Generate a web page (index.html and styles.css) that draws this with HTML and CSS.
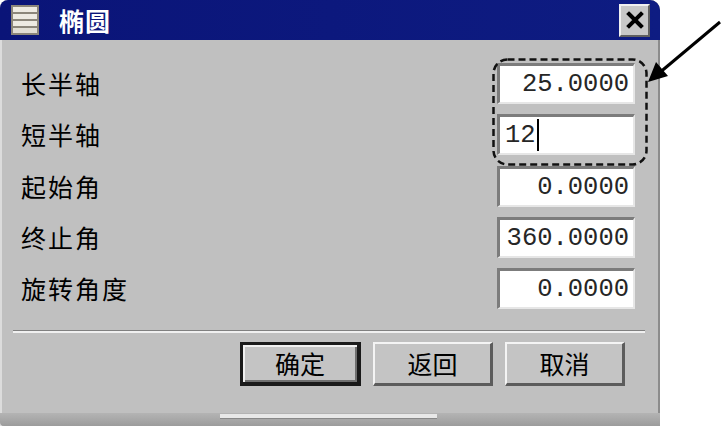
FILE: index.html
```html
<!DOCTYPE html>
<html lang="zh-CN">
<head>
    <meta charset="UTF-8">
    <title>椭圆</title>
    <link rel="stylesheet" href="styles.css">
</head>
<body>

    <div class="dialog">
        <div class="titlebar">
            <svg class="title-icon" width="28" height="30" viewBox="0 0 28 30">
                <rect x="0" y="0" width="28" height="30" fill="#8c867a"/>
                <rect x="2" y="2" width="24" height="5" fill="#eeeae2"/>
                <rect x="2" y="9" width="24" height="5" fill="#eeeae2"/>
                <rect x="2" y="16" width="24" height="5" fill="#eeeae2"/>
                <rect x="2" y="23" width="24" height="5" fill="#e2ded4"/>
            </svg>
            <span class="title">椭圆</span>
            <div class="close-btn">
                <svg width="18" height="18" viewBox="0 0 18 18">
                    <path d="M3 3 L15 15 M15 3 L3 15" stroke="#000" stroke-width="4" stroke-linecap="square"/>
                </svg>
            </div>
        </div>

        <div class="content">
            <div class="form">
                <div class="label">长半轴</div>
                <div class="field">25.0000</div>
                <div class="label">短半轴</div>
                <div class="field left">12<span class="caret"></span></div>
                <div class="label">起始角</div>
                <div class="field">0.0000</div>
                <div class="label">终止角</div>
                <div class="field">360.0000</div>
                <div class="label">旋转角度</div>
                <div class="field">0.0000</div>
            </div>

            <div class="separator"></div>

            <div class="buttons">
                <div class="btn default">确定</div>
                <div class="btn">返回</div>
                <div class="btn">取消</div>
            </div>
        </div>

        <div class="bottom">
            <div class="bottom-bar"></div>
        </div>

        <!-- annotation around the two axis fields -->
        <svg class="highlight" width="156" height="108" viewBox="0 0 156 108">
            <rect x="1.5" y="1.5" width="153" height="105" rx="14" fill="none" stroke="#111" stroke-width="2.5" stroke-dasharray="7 4"/>
        </svg>
    </div>

    <svg class="arrow" width="80" height="70" viewBox="0 0 80 70">
        <line x1="76" y1="4" x2="14" y2="56" stroke="#000" stroke-width="3"/>
        <polygon points="4,64 12,44 24,58" fill="#000"/>
    </svg>

</body>
</html>
```

FILE: styles.css
```css
body {
    margin: 0;
    padding: 0;
    background-color: #ffffff;
    font-family: "Noto Sans CJK SC", "Noto Sans", sans-serif;
    width: 722px;
    height: 426px;
    overflow: hidden;
    position: relative;
}
.dialog {
    position: relative;
    width: 660px;
    height: 426px;
    background-color: #c0c0c0;
    border-radius: 8px 10px 0 0;
    box-shadow: inset 2px 0 0 #dcdcdc, inset -2px 0 0 #8c8c8c;
    display: flex;
    flex-direction: column;
}
.titlebar {
    height: 40px;
    background: linear-gradient(to right, #0a1478, #0e1c82);
    border-radius: 8px 10px 0 0;
    display: flex;
    align-items: center;
    padding: 0 10px 0 11px;
}
.title-icon {
    display: block;
}
.title {
    color: #ffffff;
    font-size: 25px;
    font-weight: bold;
    margin-left: 20px;
    letter-spacing: 1px;
}
.close-btn {
    margin-left: auto;
    width: 27px;
    height: 29px;
    background-color: #c8c8c8;
    border-top: 2px solid #f0f0f0;
    border-left: 2px solid #f0f0f0;
    border-right: 2px solid #606060;
    border-bottom: 2px solid #606060;
    display: flex;
    align-items: center;
    justify-content: center;
}
.close-btn svg {
    display: block;
}
.content {
    flex-grow: 1;
    padding: 23px 0 0 0;
}
.form {
    display: grid;
    grid-template-columns: 1fr 138px;
    grid-auto-rows: 41px;
    row-gap: 10.3px;
    padding: 0 25px 0 21px;
    align-items: center;
}
.label {
    font-size: 25px;
    letter-spacing: 2px;
    color: #000000;
    line-height: 41px;
}
.field {
    box-sizing: border-box;
    height: 41px;
    background-color: #ffffff;
    border-top: 3px solid #7c7c7c;
    border-left: 3px solid #7c7c7c;
    border-right: 2px solid #e6e6e6;
    border-bottom: 2px solid #e6e6e6;
    font-family: "Liberation Mono", "DejaVu Sans Mono", monospace;
    font-size: 25.5px;
    color: #262626;
    text-align: right;
    padding-right: 4px;
    line-height: 37px;
}
.field.left {
    text-align: left;
    padding-left: 5px;
    display: flex;
    align-items: center;
}
.caret {
    display: inline-block;
    width: 2px;
    height: 32px;
    background-color: #000000;
    margin-left: 1px;
}
.separator {
    margin: 21px 15px 0 13px;
    height: 1px;
    background-color: #808080;
    border-bottom: 2px solid #f0f0f0;
}
.buttons {
    display: flex;
    justify-content: flex-end;
    gap: 12px;
    padding: 9px 35px 0 0;
}
.btn {
    box-sizing: border-box;
    width: 120px;
    height: 44px;
    background-color: #c4c4c4;
    border-top: 2px solid #f4f4f4;
    border-left: 2px solid #f4f4f4;
    border-right: 3px solid #5c5c5c;
    border-bottom: 3px solid #5c5c5c;
    font-size: 25px;
    text-align: center;
    line-height: 38px;
    color: #000000;
}
.btn.default {
    width: 121px;
    border: 3px solid #1a1a1a;
    border-bottom-width: 4px;
    border-right-width: 4px;
    box-shadow: inset 2px 2px 0 #f0f0f0, inset -2px -2px 0 #707070;
    line-height: 36px;
}
.bottom {
    height: 13px;
    background: linear-gradient(to bottom, #b4b4b4, #9c9c9c);
    border-radius: 0 0 0 4px;
}
.bottom-bar {
    width: 217px;
    height: 4px;
    margin: 1px 0 0 220px;
    background-color: #e8e8e8;
    border-bottom: 1px solid #888888;
}
.highlight {
    position: absolute;
    left: 492px;
    top: 58px;
}
.arrow {
    position: absolute;
    left: 644px;
    top: 18px;
}
```
